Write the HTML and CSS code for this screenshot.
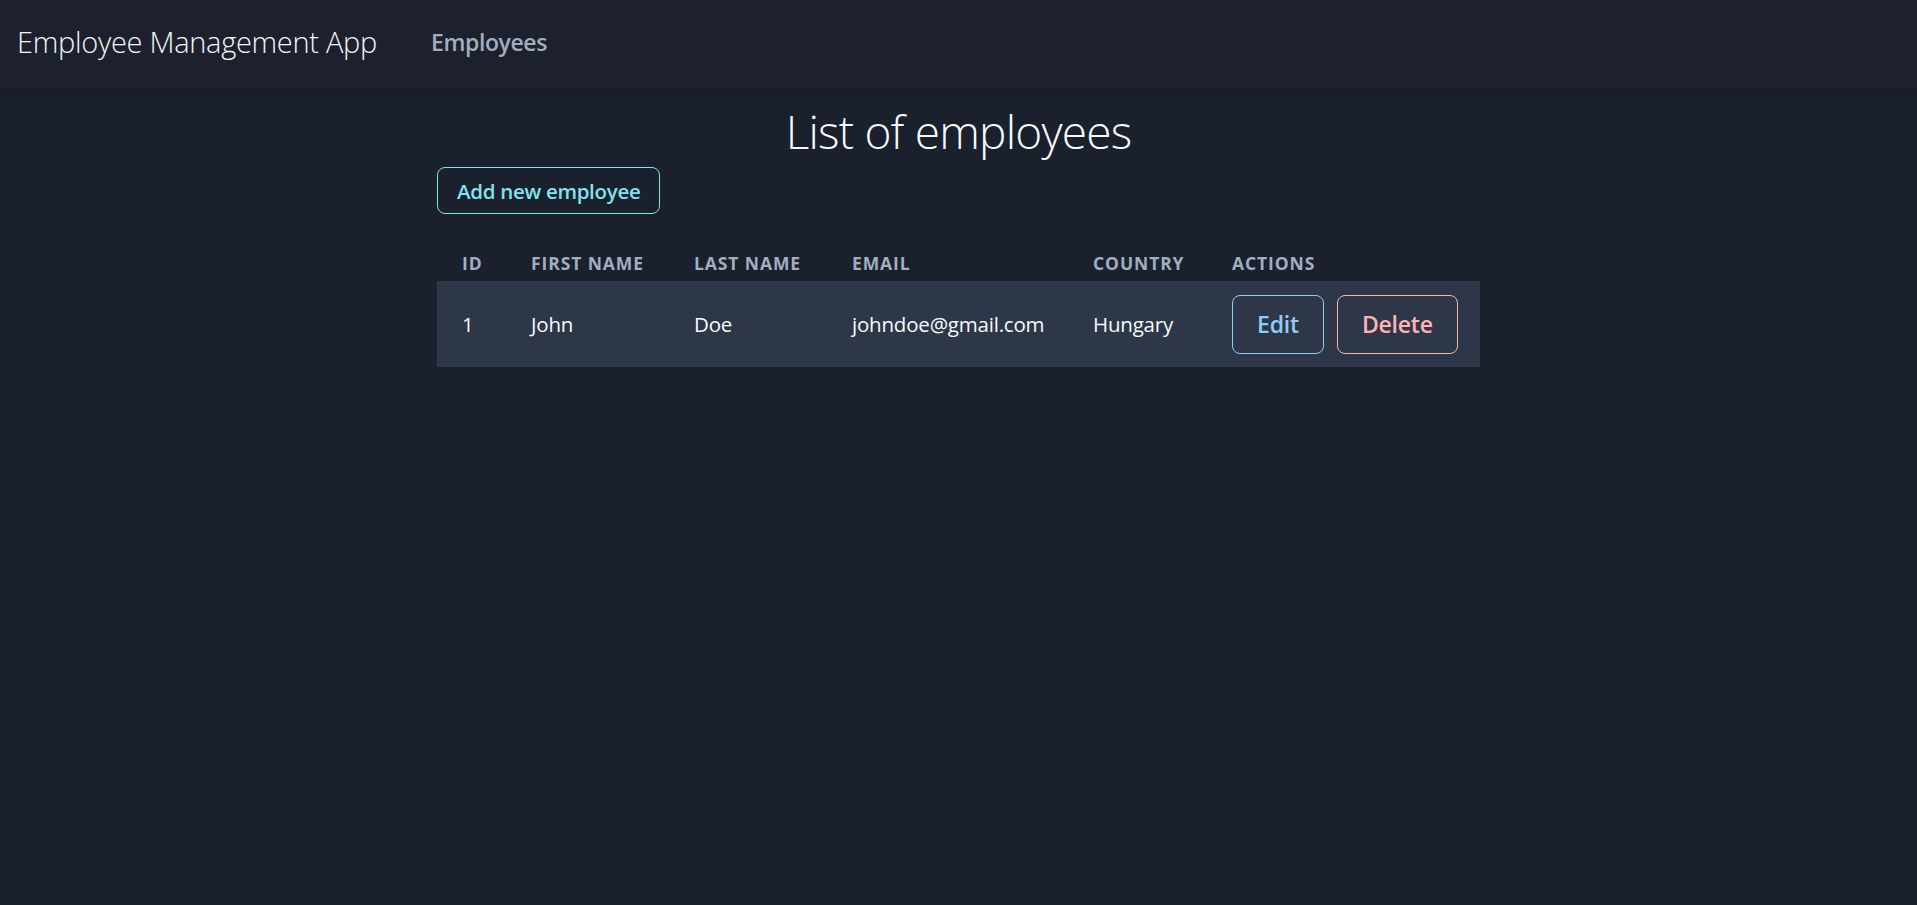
FILE: index.html
```html
<!DOCTYPE html>
<html lang="en">
<head>
<meta charset="utf-8">
<title>Employee Management App</title>
<link rel="stylesheet" href="styles.css">
</head>
<body>
<nav class="navbar">
  <span class="brand">Employee Management App</span>
  <a class="nav-link" href="#">Employees</a>
</nav>
<main class="content">
  <h1 class="page-title">List of employees</h1>
  <div class="toolbar">
    <button class="btn btn-add" type="button">Add new employee</button>
  </div>
  <table class="emp-table">
    <colgroup>
      <col class="c-id"><col class="c-first"><col class="c-last"><col class="c-email"><col class="c-country"><col class="c-actions">
    </colgroup>
    <thead>
      <tr>
        <th>ID</th><th>First name</th><th>Last name</th><th>Email</th><th>Country</th><th>Actions</th>
      </tr>
    </thead>
    <tbody>
      <tr>
        <td>1</td><td>John</td><td>Doe</td><td>johndoe@gmail.com</td><td>Hungary</td>
        <td><div class="actions"><button class="btn btn-edit" type="button">Edit</button><button class="btn btn-delete" type="button">Delete</button></div></td>
      </tr>
    </tbody>
  </table>
</main>
</body>
</html>
```
FILE: styles.css
```css
* { box-sizing: border-box; }
html, body { margin: 0; padding: 0; }
body {
  background: #1a202c;
  color: #f7fafc;
  font-family: "Open Sans", "Noto Sans", sans-serif;
  min-height: 905px;
}
.navbar {
  height: 88px;
  display: flex;
  align-items: center;
  padding: 0 0 5px 17px;
  gap: 54px;
  background: #1c212d;
  box-shadow: 0 4px 10px rgba(0, 0, 0, 0.18);
}
.brand {
  font-size: 29px;
  font-weight: 300;
  color: #f1f5f9;
  letter-spacing: -0.3px;
}
.nav-link {
  font-size: 23px;
  font-weight: 600;
  color: #a0aec0;
  text-decoration: none;
  letter-spacing: -0.4px;
}
.content {
  width: 1043px;
  margin: 0 auto;
  padding-top: 10px;
}
.page-title {
  margin: 0;
  text-align: center;
  font-size: 46px;
  font-weight: 300;
  line-height: 66px;
  letter-spacing: -0.8px;
  color: #f7fafc;
}
.toolbar {
  display: flex;
  margin-top: 3px;
}
.btn {
  font-family: inherit;
  background: transparent;
  border: 1px solid;
  border-radius: 8px;
  cursor: pointer;
  font-weight: 600;
}
.btn-add {
  height: 47px;
  padding: 0 19px;
  font-size: 20.5px;
  color: #81e3ef;
  border-color: #81e3ef;
  letter-spacing: -0.3px;
}
.emp-table {
  width: 100%;
  margin-top: 23px;
  border-collapse: collapse;
  table-layout: fixed;
}
.c-id { width: 69px; }
.c-first { width: 163px; }
.c-last { width: 158px; }
.c-email { width: 241px; }
.c-country { width: 139px; }
.c-actions { width: 273px; }
.emp-table th {
  text-align: left;
  padding: 15px 24px 7px 25px;
  font-size: 17.5px;
  font-weight: 700;
  text-transform: uppercase;
  letter-spacing: 0.9px;
  color: #a0aec0;
  line-height: 22px;
}
.emp-table tbody tr { background: #2d3748; }
.emp-table td {
  height: 86px;
  padding: 0 24px 0 25px;
  font-size: 20.5px;
  color: #f7fafc;
  vertical-align: middle;
  white-space: nowrap;
  letter-spacing: -0.2px;
}
.actions {
  display: flex;
  gap: 13px;
}
.btn-edit, .btn-delete {
  height: 59px;
  font-size: 23px;
  letter-spacing: -0.2px;
}
.btn-edit {
  padding: 0 24px;
  color: #90cdf4;
  border-color: #90cdf4;
}
.btn-delete {
  padding: 0 24px;
  color: #feb2b2;
  border-color: #feb2b2;
}
```
